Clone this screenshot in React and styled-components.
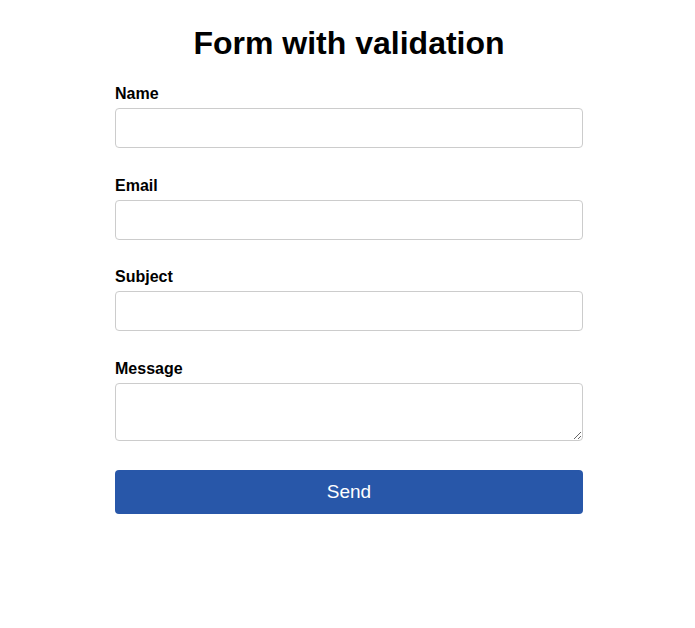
import React from 'react';
import styled, { createGlobalStyle } from 'styled-components';

const GlobalStyle = createGlobalStyle`
  body {
    margin: 0;
    background: #fff;
    font-family: "Liberation Sans", Arial, sans-serif;
    color: #000;
  }
`;

const Wrapper = styled.div`
  max-width: 468px;
  margin: 0 auto;
  padding: 25px 0 0 3px;
`;

const Title = styled.h1`
  margin: 0 0 23px;
  font-size: 32px;
  font-weight: bold;
  text-align: center;
`;

const Form = styled.form`
  display: flex;
  flex-direction: column;
`;

const Field = styled.div`
  display: flex;
  flex-direction: column;
  margin-bottom: ${(p) => (p.last ? '29px' : '28.6px')};
`;

const Label = styled.label`
  font-size: 16px;
  font-weight: bold;
  margin-bottom: 5px;
`;

const Input = styled.input`
  box-sizing: border-box;
  width: 100%;
  height: 40px;
  padding: 8px 10px;
  border: 1px solid #ccc;
  border-radius: 4px;
  font-family: inherit;
  font-size: 16px;
`;

const TextArea = styled.textarea`
  box-sizing: border-box;
  display: block;
  width: 100%;
  height: 58px;
  padding: 8px 10px;
  border: 1px solid #ccc;
  border-radius: 4px;
  font-family: inherit;
  font-size: 16px;
`;

const SendButton = styled.button`
  height: 44px;
  border: 0;
  border-radius: 4px;
  background: #2857a9;
  color: #fff;
  font-family: inherit;
  font-size: 19px;
  cursor: pointer;
`;

const fields = ['Name', 'Email', 'Subject'];

const App = () => (
  <>
    <GlobalStyle />
    <Wrapper>
      <Title>Form with validation</Title>
      <Form onSubmit={(e) => e.preventDefault()}>
        {fields.map((f) => (
          <Field key={f}>
            <Label htmlFor={f.toLowerCase()}>{f}</Label>
            <Input id={f.toLowerCase()} type={f === 'Email' ? 'email' : 'text'} />
          </Field>
        ))}
        <Field last>
          <Label htmlFor="message">Message</Label>
          <TextArea id="message" />
        </Field>
        <SendButton type="submit">Send</SendButton>
      </Form>
    </Wrapper>
  </>
);

export default App;
